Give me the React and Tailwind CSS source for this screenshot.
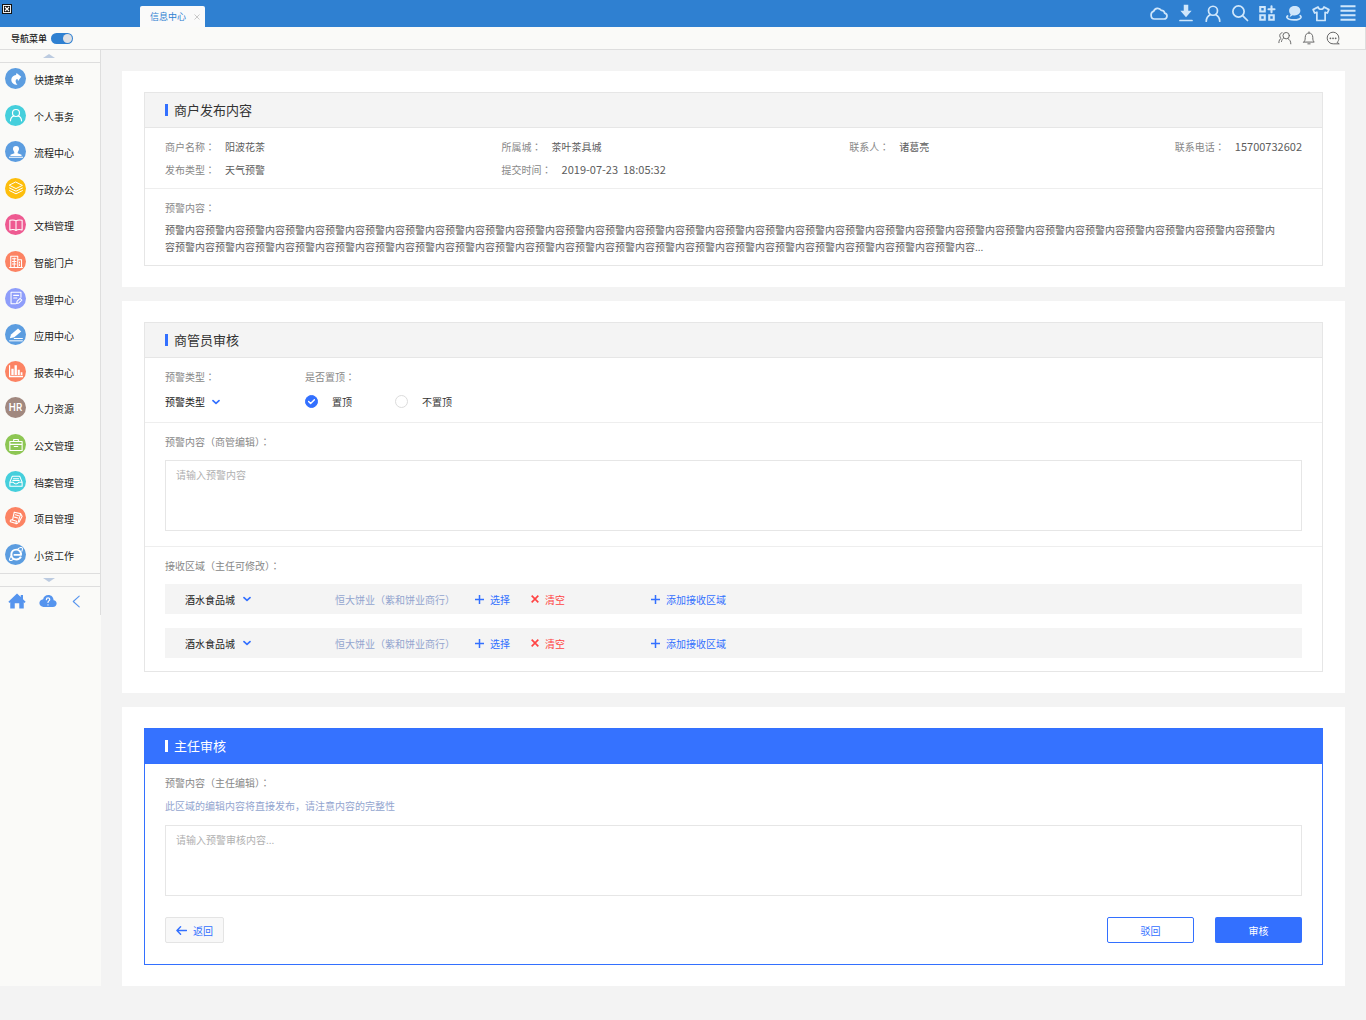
import React, { useState } from 'react';
import clsx from 'clsx';

const FONT = "font-['Noto_Sans_CJK_SC','Noto_Sans',sans-serif]";

const Svg = ({ children, className, ...props }) => (
  <svg
    viewBox="0 0 24 24"
    fill="none"
    stroke="currentColor"
    strokeWidth="2"
    strokeLinecap="round"
    strokeLinejoin="round"
    className={className}
    aria-hidden="true"
    {...props}
  >
    {children}
  </svg>
);

const topIcons = [
  {
    label: '云盘',
    icon: <path d="M6 20H18.500a4 4 0 0 0 1-7.900 4 4 0 0 0-4.500-3.600A5.500 5.500 0 0 0 5 9.500 5.300 5.300 0 0 0 1.500 15c0 3 2 5 4.500 5z" />,
  },
  {
    label: '下载',
    icon: (
      <>
        <path d="M9 1h6v8h4.500L12 17.500 4.500 9H9z" fill="currentColor" stroke="none" />
        <path d="M4 22h16" />
      </>
    ),
  },
  {
    label: '用户',
    icon: (
      <>
        <circle cx="12" cy="9" r="6" />
        <path d="M3 23c0-4.500 2-7 5.500-9M21 23c0-4.500-2-7-5.500-9" />
      </>
    ),
  },
  {
    label: '搜索',
    icon: (
      <>
        <circle cx="10" cy="10" r="7.500" />
        <path d="M15.500 15.500L22 22" />
      </>
    ),
  },
  {
    label: '应用',
    icon: (
      <g strokeWidth="2.800" strokeLinejoin="miter">
        <path d="M3 4h6v6H3zM3 15h6v6H3zM15 15h6v6h-6zM18 3v8M14 7h8" />
      </g>
    ),
  },
  {
    label: '消息',
    icon: (
      <>
        <path d="M13 2.500c4.500 0 7.500 2.600 7.500 6.200s-3 6.500-7.500 6.500c-1 0-2 0-2.800-.3L6 17.500l1.500-3.800c-1.500-1.200-2-3-2-5 0-3.600 3-6.200 7.500-6.200z" fill="currentColor" stroke="none" />
        <path d="M3.500 16c-1 .6-1.300 1.400-.8 2.200 1.300 2 5 3 9.300 3 4.800 0 8.500-1.400 9.300-3.400.3-.9-.2-1.600-1-2.300" />
      </>
    ),
  },
  {
    label: '换肤',
    icon: <path d="M8 4L1.500 7.500 3.500 12l3-1v11h11V11l3 1 2-4.500L16 4c-.6 1.800-2 3-4 3S8.600 5.800 8 4z" />,
  },
  {
    label: '菜单',
    icon: <path d="M2 3h20M2 9h20M2 15h20M2 21h20" strokeLinecap="butt" strokeWidth="2.600" />,
  },
];

const subIcons = [
  {
    label: '联系人',
    icon: (
      <>
        <circle cx="14" cy="8" r="5.500" />
        <path d="M17 13c3 1.700 5 4.500 5 9M9.500 12c-2 1.500-3 3-3.500 6M7 3C4.500 3.500 3 5.500 3 8c0 2 .8 3.500 2.300 4.500C3 14 1.500 16.500 1.500 20" />
      </>
    ),
  },
  {
    label: '通知',
    icon: <path d="M12 1.500v2M3 19h18c-2-1.800-2.500-3.500-2.500-8 0-4.500-2.500-7.500-6.500-7.500S5.500 6.500 5.500 11c0 4.500-.5 6.200-2.500 8zM10 22h4" />,
  },
  {
    label: '会话',
    icon: (
      <>
        <path d="M22 22h-9.500A10 10 0 1 1 22 12.500c0 3-1 5-2.500 6.500z" />
        <path d="M7.500 12.500h.1M12 12.500h.1M16.500 12.500h.1" strokeWidth="3" />
      </>
    ),
  },
];

const menuItems = [
  {
    name: '快捷菜单',
    color: 'bg-[#5c9de0]',
    icon: <path d="M13 1.500l8 6.500-5.500 7.500-.8-3.500c-2.500.3-3.700 2-3.200 5 .4 2 1.500 3.500 3 5C8 22 3.500 18 4 12.500c.4-4 3.500-7 8-7.500z" fill="currentColor" stroke="none" />,
  },
  {
    name: '个人事务',
    color: 'bg-[#45cfdc]',
    icon: (
      <>
        <circle cx="12" cy="8.500" r="6" />
        <path d="M2.500 22c.3-5 2.500-7.500 6-8.500M21.500 22c-.3-5-2.500-7.500-6-8.500" />
      </>
    ),
  },
  {
    name: '流程中心',
    color: 'bg-[#5c9de0]',
    icon: <path d="M12 1.500a5.400 5.400 0 0 1 5.200 5.400c0 3-2.500 3.800-2.500 7.300l6.800 2.500V19h-19v-2.300l6.800-2.500c0-3.500-2.500-4.300-2.500-7.300A5.400 5.400 0 0 1 12 1.500zM0 20h24v2H0z" fill="currentColor" stroke="none" />,
  },
  {
    name: '行政办公',
    color: 'bg-[#fdbe0c]',
    icon: <path d="M12 2l11 5.500-11 5.500L1 7.500zM1 12l11 5.500L23 12M1 16.500L12 22l11-5.500" strokeWidth="1.700" />,
  },
  {
    name: '文档管理',
    color: 'bg-[#ee5a91]',
    icon: <path d="M12 5C9.500 3 5.500 3 1.500 4v16.500c4-1 8-1 10.500 1 2.500-2 6.500-2 10.500-1V4c-4-1-8-1-10.500 1zM12 5v16.500" strokeWidth="1.800" />,
  },
  {
    name: '智能门户',
    color: 'bg-[#fc8363]',
    icon: (
      <g strokeWidth="1.800">
        <path d="M3 21V2h12v19M15 8h6.500v13M1 21.500h22M18 12v1.500M18 16.500v1.500" />
        <path d="M6 6.500h6M6 11h6M6 15.500h6M9 5v16" />
      </g>
    ),
  },
  {
    name: '管理中心',
    color: 'bg-[#8e9dfa]',
    icon: (
      <g strokeWidth="1.800">
        <path d="M20.500 10.500V2h-17v20h8M8 7.500h8.500M8 12h5.500" />
        <path d="M13 21.500l1-4 5-5 3 3-5 5z" />
      </g>
    ),
  },
  {
    name: '应用中心',
    color: 'bg-[#5c9de0]',
    icon: (
      <>
        <path d="M1.500 17.500l2-6.500L15.500 1l5.500 5L9 16z" fill="currentColor" stroke="none" />
        <path d="M9 18h14M1 22h22" strokeWidth="1.700" />
      </>
    ),
  },
  {
    name: '报表中心',
    color: 'bg-[#fc8363]',
    icon: <path d="M0 2h2v18h22v2.500H0zM4 8h4v11H4zM9.500 2h4v17h-4zM15 10h3.500v9H15zM20 14h3v5h-3z" fill="currentColor" stroke="none" />,
  },
  { name: '人力资源', color: 'bg-[#a1887f]', text: 'HR' },
  {
    name: '公文管理',
    color: 'bg-[#8dc653]',
    icon: <path d="M1.500 6h21v15.500h-21zM8 6V2.500h8V6M2 11h20M9 14.500h6" strokeWidth="1.900" />,
  },
  {
    name: '档案管理',
    color: 'bg-[#45cfdc]',
    icon: <path d="M5.500 4h13l4 10v7h-21v-7zM2 14h5.500c.5 2 2 3 4.500 3s4-1 4.500-3H22M7.500 8h9M6.500 11h11" strokeWidth="1.800" />,
  },
  {
    name: '项目管理',
    color: 'bg-[#fc8363]',
    icon: <path d="M9 2l11 2.500-4.500 15c-.5 1.500-2 2.500-3.500 2L2.500 18.500c-.8-1.800 0-3.500 1.500-3.500l2 .5zM6 15.500l7 2c-.5 1.500-.8 3-1.500 4M11 6.500l5.500 1.500M9.500 10.500l5.500 1.500M20 5l2.500 4-5 10" strokeWidth="1.900" />,
  },
  {
    name: '小贷工作',
    color: 'bg-[#5c9de0]',
    icon: (
      <>
        <path d="M20.500 16.500c-1.500 3-4.500 5-8 5-5 0-8.500-3.700-8.500-8.500s3.500-8.500 8.500-8.500 8.500 3.500 8 9H8" strokeWidth="3.400" strokeLinecap="butt" />
        <path d="M4 14.500c-3.500 5.500-4 8-2 8.700 1.200.3 3.500-.5 5.500-2M15.500 3C19 .8 22 .3 22.800 1.700c.6 1 .2 3-.8 5.500" strokeWidth="1.800" />
      </>
    ),
  },
];

const merchantInfo = [
  { label: '商户名称', value: '阳波花茶' },
  { label: '所属城', value: '茶叶茶具城' },
  { label: '联系人', value: '诸葛亮' },
  { label: '联系电话', value: '15700732602', numeric: true },
  { label: '发布类型', value: '天气预警' },
  { label: '提交时间', value: '2019-07-23\u00a0\u00a018:05:32', numeric: true },
];

// The TC face centres the full-width colon in its cell
const Colon = () => <span className="font-['Noto_Sans_CJK_TC',sans-serif]">：</span>;

const IconButton = ({ label, className, children }) => (
  <button type="button" aria-label={label} className={className}>
    {children}
  </button>
);

const TopBar = () => (
  <header className="flex h-[27px] items-start justify-between bg-[#2f80d1]">
    <div className="flex items-start">
      <div className="mt-[4px] ml-[2px] w-[138px]">
        <svg viewBox="0 0 10 10" className="h-[10px] w-[10px]" aria-hidden="true">
          <rect width="10" height="10" fill="#111" />
          <rect x="1" y="1" width="8" height="8" fill="#eee" />
          <rect x="2" y="2" width="6" height="6" fill="#111" />
          <path d="M3 3l4 4M7 3l-4 4" stroke="#fff" strokeWidth="1.200" />
        </svg>
      </div>
      <div className="mt-[6px] flex h-[21px] w-[65px] items-center rounded-t-[2px] bg-[#fafafa] pl-[10px]">
        <a href="#info" className="text-[9px] leading-[20px] text-[#2f80d1]">信息中心</a>
        <IconButton label="关闭" className="ml-[8px] text-[#c8c8c8]">
          <Svg className="h-[6px] w-[6px]" strokeWidth="4"><path d="M3 3l18 18M21 3L3 21" /></Svg>
        </IconButton>
      </div>
    </div>
    <div className="flex h-[25px] items-center gap-[9px] pr-[9px] text-[#cfe6fb]">
      {topIcons.map((item) => (
        <IconButton key={item.label} label={item.label}>
          <Svg className="h-[18px] w-[18px]" strokeWidth="2.300">{item.icon}</Svg>
        </IconButton>
      ))}
    </div>
  </header>
);

const SubBar = () => {
  const [navOn, setNavOn] = useState(true);

  return (
    <div className="flex h-[23px] items-center justify-between border-r border-b border-[#dedede] bg-[#fafaf8] pr-[25px] pl-[11px]">
      <label className="flex items-center gap-[4px] text-[9px] font-medium text-[#222]">
        导航菜单
        <span className="relative flex">
          <input
            type="checkbox"
            checked={navOn}
            onChange={(e) => setNavOn(e.target.checked)}
            className="h-[11px] w-[22px] appearance-none rounded-full bg-[#bbb] checked:bg-[#2f80d1]"
          />
          <span
            className={clsx(
              'pointer-events-none absolute top-[1px] h-[9px] w-[9px] rounded-full bg-[#dfe0e4]',
              navOn ? 'right-[1px]' : 'left-[1px]'
            )}
          />
        </span>
      </label>
      <div className="flex items-center gap-[10px] text-[#666]">
        {subIcons.map((item) => (
          <IconButton key={item.label} label={item.label}>
            <Svg className="h-[14px] w-[14px]" strokeWidth="1.700">{item.icon}</Svg>
          </IconButton>
        ))}
      </div>
    </div>
  );
};

const Sidebar = () => (
  <aside className="w-[101px] shrink-0 bg-[#fafaf8]">
    <div className="border-r border-[#dedede]">
      <button type="button" aria-label="向上滚动" className="flex h-[13px] w-full items-center justify-center border-b border-[#dedede] pr-[3px]">
        <svg viewBox="0 0 12 4" className="h-[4px] w-[12px]" aria-hidden="true"><path d="M0 4L6 0l6 4z" fill="#bccbe0" /></svg>
      </button>
      <nav className="flex h-[510px] flex-col justify-between">
        {menuItems.map((item) => (
          <a key={item.name} href="#menu" className="flex h-[34px] items-start gap-[8px] pt-[5px] pl-[5px]">
            <span className={clsx('flex h-[21px] w-[21px] items-center justify-center rounded-full text-white', item.color)}>
              {item.text ? (
                <span className="font-['Roboto',sans-serif] text-[10px] leading-[12px] font-medium">{item.text}</span>
              ) : (
                <Svg className="h-[14px] w-[14px]">{item.icon}</Svg>
              )}
            </span>
            <span className="text-[10px] leading-[24px] text-[#222]">{item.name}</span>
          </a>
        ))}
      </nav>
      <button type="button" aria-label="向下滚动" className="flex h-[14px] w-full items-center justify-center border-y border-[#dedede] pr-[3px]">
        <svg viewBox="0 0 12 4" className="h-[4px] w-[12px]" aria-hidden="true"><path d="M0 0l6 4 6-4z" fill="#bccbe0" /></svg>
      </button>
      <div className="flex h-[28px] items-center gap-[13px] pl-[8px] text-[#5594ee]">
        <IconButton label="首页">
          <Svg className="h-[18px] w-[18px]">
            <path d="M12 2l5 4.800V4h3v5.700l3.500 3.300-1.500 1.500-1-.8V22h-6v-7H9v7H3v-8.300l-1 .8L.5 13z" fill="currentColor" stroke="none" />
          </Svg>
        </IconButton>
        <IconButton label="帮助">
          <Svg className="h-[18px] w-[18px]">
            <path d="M6 20h12.500c3 0 5-2 5-4.600 0-2.500-1.600-4.200-4-4.500C19.300 7 16.500 4 12.500 4 8.800 4 6 6.300 5.500 9.500 2.700 9.900.5 12 .5 14.800.500 17.800 3 20 6 20z" fill="currentColor" stroke="none" />
            <path d="M9.800 10.200c0-3 4.500-3 4.500-.3 0 2-2.300 1.800-2.300 4M12 17v.2" stroke="#fff" strokeWidth="1.600" />
          </Svg>
        </IconButton>
        <IconButton label="收起">
          <Svg className="h-[13px] w-[13px]"><path d="M17 2L6 12l11 10" /></Svg>
        </IconButton>
      </div>
    </div>
  </aside>
);

const Panel = ({ title, primary, children }) => (
  <section className="bg-white px-[22px] py-[21px]">
    <div className={clsx('border', primary ? 'border-[#3370ff]' : 'border-[#e6e6e6]')}>
      <div
        className={clsx(
          'flex h-[35px] items-center gap-[6px] border-b px-5',
          primary ? 'border-[#3370ff] bg-[#3572ff] text-white' : 'border-[#e6e6e6] bg-[#f4f4f4] text-[#333]'
        )}
      >
        <span className={clsx('h-3 w-[3px]', primary ? 'bg-white' : 'bg-[#3370ff]')} />
        <h2 className="text-[13px] leading-[24px]">{title}</h2>
      </div>
      {children}
    </div>
  </section>
);

const Chevron = () => (
  <Svg className="pointer-events-none h-[8px] w-[8px] text-[#3370ff]" strokeWidth="5"><path d="M3 8l9 8 9-8" /></Svg>
);

const Plus = () => (
  <Svg className="h-[9px] w-[9px]" strokeWidth="4" strokeLinecap="butt"><path d="M12 0v24M0 12h24" /></Svg>
);

const Cross = () => (
  <Svg className="h-[8px] w-[8px]" strokeWidth="5" strokeLinecap="butt"><path d="M2 2l20 20M22 2L2 22" /></Svg>
);

const PinRadio = ({ value, selected, onSelect, children }) => (
  <label className="flex items-center gap-[14px] text-[#333]">
    <span className="relative flex">
      <input
        type="radio"
        name="pin"
        value={value}
        checked={selected}
        onChange={() => onSelect(value)}
        className="h-[13px] w-[13px] appearance-none rounded-full border border-[#dcdcdc] bg-white checked:border-[#3370ff] checked:bg-[#3370ff]"
      />
      {selected && (
        <Svg className="pointer-events-none absolute top-[3px] left-[3px] h-[7px] w-[7px] text-white" strokeWidth="5">
          <path d="M2 12l7 7L22 6" />
        </Svg>
      )}
    </span>
    {children}
  </label>
);

const AreaRow = ({ id }) => (
  <div className="grid h-[30px] grid-cols-[150px_140px_56px_120px_auto] items-center bg-[#f4f4f4] pl-5">
    <div className="flex items-center gap-[8px]">
      <select id={id} aria-label="接收区域" className="appearance-none text-[#222]">
        <option>酒水食品城</option>
      </select>
      <Chevron />
    </div>
    <span className="text-[#93a5cf]">恒大饼业（紫和饼业商行）</span>
    <button type="button" className="flex items-center gap-[6px] text-[#3370ff]"><Plus />选择</button>
    <button type="button" className="flex items-center gap-[6px] text-[#ff4444]"><Cross />清空</button>
    <button type="button" className="flex items-center gap-[6px] text-[#3370ff]"><Plus />添加接收区域</button>
  </div>
);

const textareaClass =
  'block h-[71px] w-full resize-none border border-[#e6e6e6] bg-white px-[10px] py-[6px] text-[10px] leading-[16px] text-[#333] outline-none placeholder:text-[#b0b0b0]';

export default function App() {
  const [pin, setPin] = useState('top');

  return (
    <div className={clsx('min-h-screen bg-[#f3f3f3] text-[10px] leading-[23px] text-[#888]', FONT)}>
      <TopBar />
      <SubBar />
      <div className="flex">
        <Sidebar />
        <main className="flex min-w-0 flex-1 flex-col gap-[14px] px-[21px] pt-[21px]">
          {/* Merchant content */}
          <Panel title="商户发布内容">
            <dl className="grid grid-cols-[337fr_348fr_326fr_127fr] border-b border-[#eeeeee] px-5 py-[7px]">
              {merchantInfo.map((item) => (
                <div key={item.label} className="flex gap-[10px] whitespace-nowrap">
                  <dt>{item.label}<Colon /></dt>
                  <dd className={clsx('text-[#5c5c5c]', item.numeric && 'text-[11px]')}>{item.value}</dd>
                </div>
              ))}
            </dl>
            <div className="px-5 pt-[7px] pb-[10px]">
              <h3>预警内容<Colon /></h3>
              <p className="mt-[2px] leading-[17px] text-[#5c5c5c]">
                {'预警内容'.repeat(27)}预警内
                <br />
                容{'预警内容'.repeat(20)}...
              </p>
            </div>
          </Panel>

          {/* Manager review */}
          <Panel title="商管员审核">
            <div className="grid grid-cols-[140px_auto] gap-y-[2px] border-b border-[#eeeeee] px-5 pt-[7px] pb-[9px]">
              <label htmlFor="warn-type">预警类型<Colon /></label>
              <span id="pin-label">是否置顶<Colon /></span>
              <div className="flex items-center gap-[7px]">
                <select id="warn-type" className="appearance-none text-[#222]">
                  <option>预警类型</option>
                </select>
                <Chevron />
              </div>
              <div role="radiogroup" aria-labelledby="pin-label" className="flex gap-[43px]">
                <PinRadio value="top" selected={pin === 'top'} onSelect={setPin}>置顶</PinRadio>
                <PinRadio value="normal" selected={pin === 'normal'} onSelect={setPin}>不置顶</PinRadio>
              </div>
            </div>
            <div className="border-b border-[#eeeeee] px-5 pt-[7px] pb-[15px]">
              <label htmlFor="manager-content" className="mb-[7px] block">预警内容（商管编辑）<Colon /></label>
              <textarea id="manager-content" placeholder="请输入预警内容" className={textareaClass} />
            </div>
            <div className="px-5 pt-[7px] pb-[13px]">
              <h3>接收区域（主任可修改）<Colon /></h3>
              <div className="mt-[7px] flex flex-col gap-[14px]">
                <AreaRow id="area-1" />
                <AreaRow id="area-2" />
              </div>
            </div>
          </Panel>

          {/* Director review */}
          <Panel title="主任审核" primary>
            <div className="px-5 pt-[7px] pb-[21px]">
              <label htmlFor="director-content" className="block">预警内容（主任编辑）<Colon /></label>
              <p className="mb-[8px] text-[#93a5cf]">此区域的编辑内容将直接发布，请注意内容的完整性</p>
              <textarea id="director-content" placeholder="请输入预警审核内容..." className={textareaClass} />
              <div className="mt-[21px] flex items-center justify-between">
                <button type="button" className="flex h-[26px] items-center gap-[6px] rounded-[2px] border border-[#e4e4e4] bg-[#f8f8f8] px-[10px] text-[#3370ff]">
                  <Svg className="h-[11px] w-[11px]" strokeWidth="3"><path d="M23 12H2M10 4l-8 8 8 8" /></Svg>
                  返回
                </button>
                <div className="flex gap-[21px]">
                  <button type="button" className="h-[26px] w-[87px] rounded-[2px] border border-[#3370ff] bg-white text-[#3370ff]">驳回</button>
                  <button type="button" className="h-[26px] w-[87px] rounded-[2px] bg-[#3370ff] text-white">审核</button>
                </div>
              </div>
            </div>
          </Panel>
        </main>
      </div>
    </div>
  );
}
